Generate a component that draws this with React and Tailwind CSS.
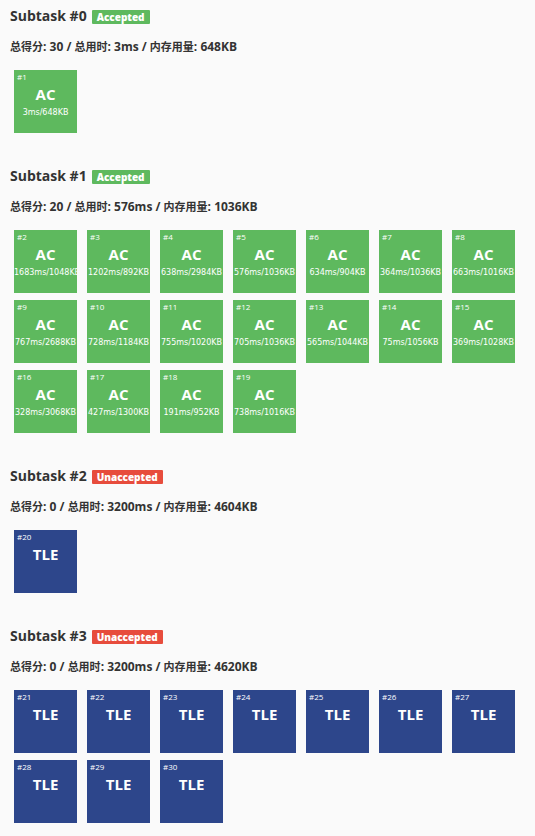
const subtasks = [
  { id: 0, accepted: true, score: 30, time: '3ms', memory: '648KB', first: 1, cases: ['3ms/648KB'] },
  {
    id: 1,
    accepted: true,
    score: 20,
    time: '576ms',
    memory: '1036KB',
    first: 2,
    cases: [
      '1683ms/1048KB', '1202ms/892KB', '638ms/2984KB', '576ms/1036KB', '634ms/904KB', '364ms/1036KB', '663ms/1016KB',
      '767ms/2688KB', '728ms/1184KB', '755ms/1020KB', '705ms/1036KB', '565ms/1044KB', '75ms/1056KB', '369ms/1028KB',
      '328ms/3068KB', '427ms/1300KB', '191ms/952KB', '738ms/1016KB',
    ],
  },
  { id: 2, accepted: false, score: 0, time: '3200ms', memory: '4604KB', first: 20, cases: [''] },
  { id: 3, accepted: false, score: 0, time: '3200ms', memory: '4620KB', first: 21, cases: Array(10).fill('') },
];

function TestCase({ number, usage, accepted }) {
  return (
    <li className={`h-[63px] w-[63px] overflow-hidden text-white ${accepted ? 'bg-[#5eb95e]' : 'bg-[#2d468b]'}`}>
      <div className="h-4 pl-[3px] text-[8px] leading-[14px]">#{number}</div>
      <div className="h-[18px] text-center text-[15px] leading-4 font-bold">{accepted ? 'AC' : 'TLE'}</div>
      <div className="text-center font-['DejaVu_Sans',sans-serif] text-[8px] leading-[18px] whitespace-nowrap">{usage}</div>
    </li>
  );
}

function Label({ children }) {
  return <span className="text-[11px]">{children}</span>;
}

function Subtask({ id, accepted, score, time, memory, first, cases }) {
  return (
    <section>
      <h2 className="flex h-[34px] items-start gap-[5px] text-[14px] leading-8 font-bold">
        Subtask #{id}
        <span
          className={`mt-[10px] rounded-[1px] px-[5px] text-[10px] leading-[14px] font-extrabold text-white ${accepted ? 'bg-[#5eb95e]' : 'bg-[#e74c3c]'}`}
        >
          {accepted ? 'Accepted' : 'Unaccepted'}
        </span>
      </h2>
      <h3 className="h-9 text-[12px] leading-[26px] font-bold">
        <Label>总得分</Label>: {score} / <Label>总用时</Label>: {time} / <Label>内存用量</Label>: {memory}
      </h3>
      <ul className="ml-1 flex flex-wrap gap-x-[10px] gap-y-[7px]">
        {cases.map((usage, i) => (
          <TestCase key={i} number={first + i} usage={usage} accepted={accepted} />
        ))}
      </ul>
    </section>
  );
}

export default function App() {
  return (
    <main className="flex min-h-screen flex-col gap-[27px] bg-[#fafafa] px-[10px] pb-[13px] font-['Open_Sans','Noto_Sans_CJK_SC',sans-serif] text-[#333]">
      {subtasks.map((subtask) => (
        <Subtask key={subtask.id} {...subtask} />
      ))}
    </main>
  );
}
